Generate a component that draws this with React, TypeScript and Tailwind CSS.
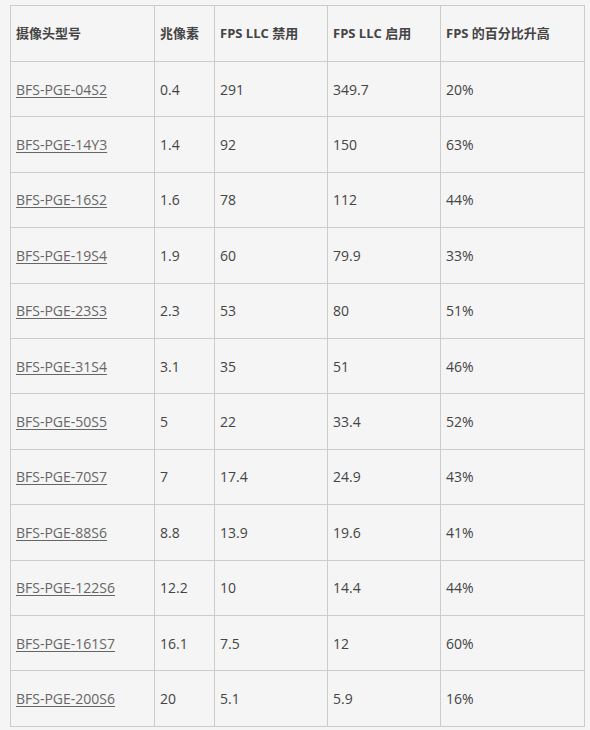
import React from 'react';

const rows: [string, string, string, string, string][] = [
  ['BFS-PGE-04S2', '0.4', '291', '349.7', '20%'],
  ['BFS-PGE-14Y3', '1.4', '92', '150', '63%'],
  ['BFS-PGE-16S2', '1.6', '78', '112', '44%'],
  ['BFS-PGE-19S4', '1.9', '60', '79.9', '33%'],
  ['BFS-PGE-23S3', '2.3', '53', '80', '51%'],
  ['BFS-PGE-31S4', '3.1', '35', '51', '46%'],
  ['BFS-PGE-50S5', '5', '22', '33.4', '52%'],
  ['BFS-PGE-70S7', '7', '17.4', '24.9', '43%'],
  ['BFS-PGE-88S6', '8.8', '13.9', '19.6', '41%'],
  ['BFS-PGE-122S6', '12.2', '10', '14.4', '44%'],
  ['BFS-PGE-161S7', '16.1', '7.5', '12', '60%'],
  ['BFS-PGE-200S6', '20', '5.1', '5.9', '16%'],
];

const headers = ['摄像头型号', '兆像素', 'FPS LLC 禁用', 'FPS LLC 启用', 'FPS 的百分比升高'];

const App: React.FC = () => {
  return (
    <div
      className="min-h-[730px] bg-[#f5f5f5] pt-[5px] pl-[10px]"
      style={{ fontFamily: '"Open Sans", "Noto Sans CJK SC", sans-serif' }}
    >
      <table className="w-[574px] table-fixed border-collapse text-[14px] text-[#444]">
        <colgroup>
          <col className="w-[144px]" />
          <col className="w-[60px]" />
          <col className="w-[113px]" />
          <col className="w-[113px]" />
          <col className="w-[144px]" />
        </colgroup>
        <thead>
          <tr className="h-[56px]">
            {headers.map((h) => (
              <th key={h} className="border border-[#cccccc] px-[5px] text-left align-middle text-[13px] font-bold text-[#444]">
                {h}
              </th>
            ))}
          </tr>
        </thead>
        <tbody>
          {rows.map((r) => (
            <tr key={r[0]} className="h-[55.4px]">
              <td className="border border-[#cccccc] px-[5px] align-middle">
                <a href="#" className="text-[#666] underline underline-offset-2">
                  {r[0]}
                </a>
              </td>
              {r.slice(1).map((c, i) => (
                <td key={i} className="border border-[#cccccc] px-[5px] align-middle">
                  {c}
                </td>
              ))}
            </tr>
          ))}
        </tbody>
      </table>
    </div>
  );
};

export default App;
